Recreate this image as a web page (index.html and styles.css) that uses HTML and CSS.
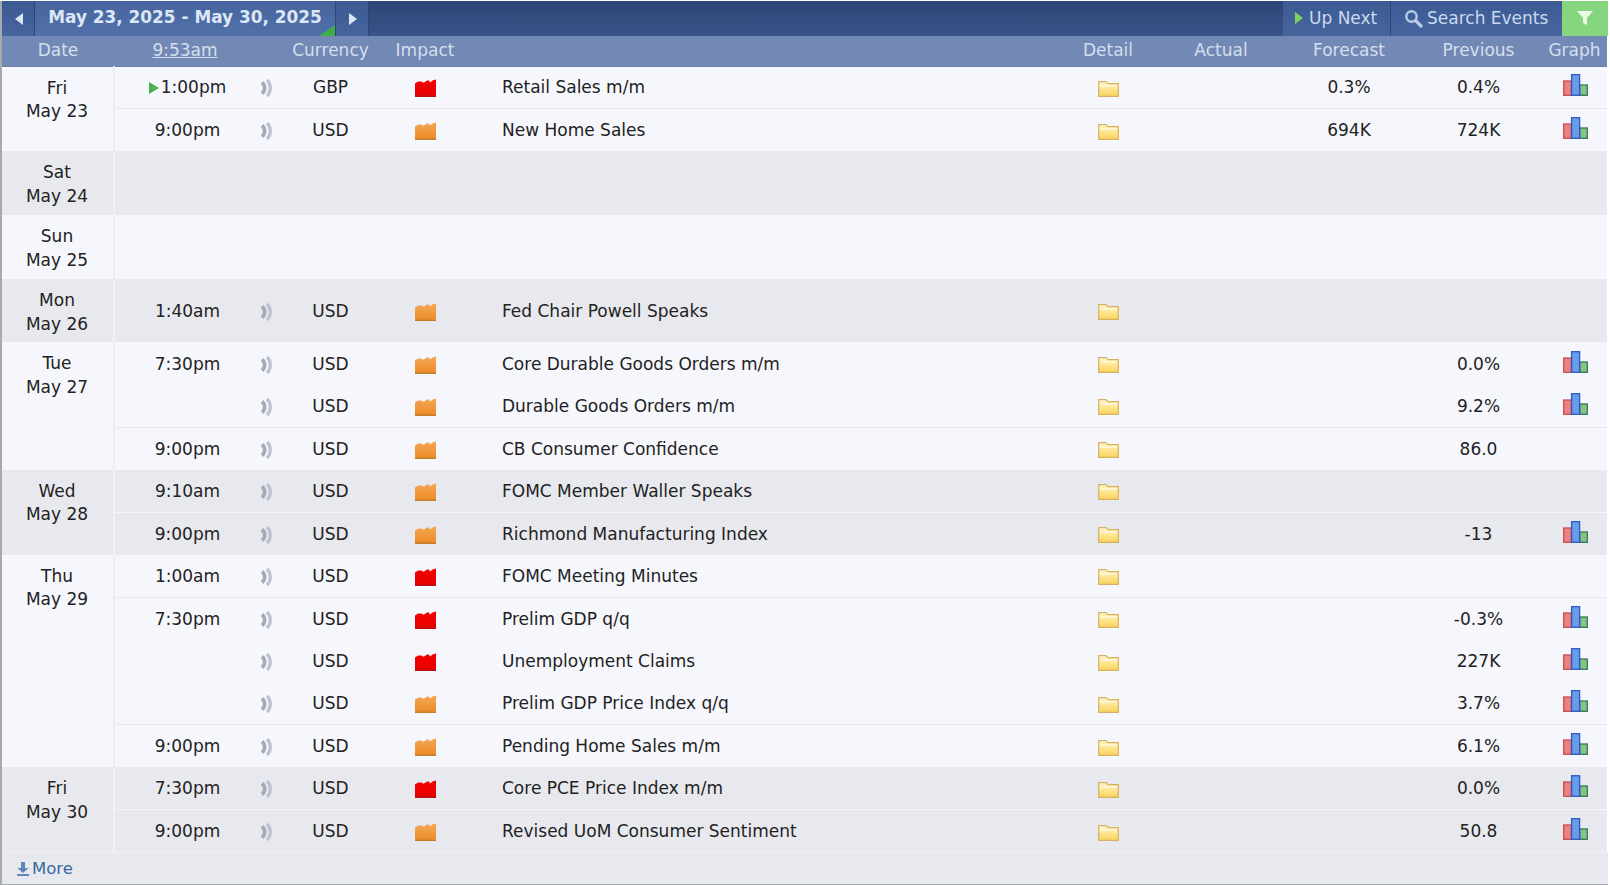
FILE: index.html
```html
<!DOCTYPE html>
<html lang="en">
<head>
<meta charset="utf-8">
<title>Calendar</title>
<link rel="stylesheet" href="styles.css">
</head>
<body>
<svg class="defs" width="0" height="0" aria-hidden="true">
  <defs>
    <linearGradient id="gRed" x1="0" y1="0" x2="0" y2="1"><stop offset="0" stop-color="#f40000"/><stop offset=".85" stop-color="#e80000"/><stop offset="1" stop-color="#b01414"/></linearGradient>
    <linearGradient id="gOra" x1="0" y1="0" x2="0" y2="1"><stop offset="0" stop-color="#f4a654"/><stop offset=".85" stop-color="#ee8f2c"/><stop offset="1" stop-color="#b97a2c"/></linearGradient>
    <linearGradient id="gFol" x1="0" y1="0" x2="0" y2="1"><stop offset="0" stop-color="#fff6cf"/><stop offset=".5" stop-color="#fde690"/><stop offset="1" stop-color="#fbd25c"/></linearGradient>
    <symbol id="high" viewBox="0 0 22 18"><path d="M0 18V4.5L3 2.5H6.5L7.5 3.5H9L12 1.5H14L15 3.5L18 1.2L21 .5V18Z" fill="url(#gRed)"/></symbol>
    <symbol id="med" viewBox="0 0 22 18"><path d="M0 18V4.5L3 2.5H6.5L7.5 3.5H9L12 1.5H14L15 3.5L18 1.2L21 .5V18Z" fill="url(#gOra)"/></symbol>
    <symbol id="snd" viewBox="0 0 14 18"><path d="M2 3.5C5.6 6.5 5.6 11.5 2 14.5" fill="none" stroke="#a4aaba" stroke-width="3.6"/><path d="M7 1C11.4 5 11.4 13 7 17" fill="none" stroke="#bcc2cf" stroke-width="3.2"/></symbol>
    <symbol id="fol" viewBox="0 0 22 17"><path d="M.7 16.3V1.7H8L10 3.7H20.3V16.3Z" fill="url(#gFol)" stroke="#d6b25e" stroke-width="1.2"/><path d="M2 6H19" stroke="#fffbe6" stroke-width="1.2"/></symbol>
    <symbol id="gra" viewBox="0 0 25 22"><rect x=".7" y="7" width="7.6" height="14.3" fill="#ef8080" stroke="#c94c4c" stroke-width="1.3"/><rect x="16.7" y="11" width="7.6" height="10.3" fill="#86c486" stroke="#35775a" stroke-width="1.3"/><rect x="8.6" y=".7" width="8" height="20.6" fill="#6a9cec" stroke="#2a5cc0" stroke-width="1.3"/></symbol>
  </defs>
</svg>
<main class="cal">
  <header class="topbar">
    <a class="nav-btn"><span class="tri tri-left"></span></a>
    <div class="range">May 23, 2025 - May 30, 2025</div>
    <a class="nav-btn"><span class="tri tri-right"></span></a>
    <div class="spacer"></div>
    <a class="tool tool-next"><span class="tri tri-green"></span>Up Next</a>
    <a class="tool tool-search">
      <svg class="ico-search" viewBox="0 0 19 19"><circle cx="7.5" cy="7.5" r="5.2" fill="none" stroke="#b9cbe6" stroke-width="2.4"/><path d="M11.5 11.5L17 17" stroke="#b9cbe6" stroke-width="3.2" stroke-linecap="round"/></svg>Search Events</a>
    <a class="tool-filter"><svg viewBox="0 0 16 16" width="16" height="16"><path d="M0 1H16L10 8V15L6 13V8Z" fill="#eafbe6"/></svg></a>
  </header>
  <table class="grid">
    <colgroup>
      <col class="c-date"><col class="c-time"><col class="c-snd"><col class="c-cur"><col class="c-imp"><col class="c-name"><col class="c-det"><col class="c-act"><col class="c-for"><col class="c-pre"><col class="c-gra">
    </colgroup>
    <thead>
      <tr><th>Date</th><th class="now"><u>9:53am</u></th><th></th><th>Currency</th><th>Impact</th><th></th><th>Detail</th><th>Actual</th><th>Forecast</th><th>Previous</th><th>Graph</th></tr>
    </thead>
    <tbody class="day">
      <tr><td class="date" rowspan="2">Fri<br>May 23</td><td class="time"><span class="tri tri-now"></span>1:00pm</td><td><svg class="i-snd"><use href="#snd"/></svg></td><td>GBP</td><td><svg class="i-imp"><use href="#high"/></svg></td><td class="name">Retail Sales m/m</td><td><svg class="i-fol"><use href="#fol"/></svg></td><td></td><td>0.3%</td><td>0.4%</td><td><svg class="i-gra"><use href="#gra"/></svg></td></tr>
      <tr class="sep"><td class="time">9:00pm</td><td><svg class="i-snd"><use href="#snd"/></svg></td><td>USD</td><td><svg class="i-imp"><use href="#med"/></svg></td><td class="name">New Home Sales</td><td><svg class="i-fol"><use href="#fol"/></svg></td><td></td><td>694K</td><td>724K</td><td><svg class="i-gra"><use href="#gra"/></svg></td></tr>
    </tbody>
    <tbody class="day alt"><tr class="empty"><td class="date">Sat<br>May 24</td><td colspan="10"></td></tr></tbody>
    <tbody class="day"><tr class="empty"><td class="date">Sun<br>May 25</td><td colspan="10"></td></tr></tbody>
    <tbody class="day alt"><tr class="solo"><td class="date">Mon<br>May 26</td><td class="time">1:40am</td><td><svg class="i-snd"><use href="#snd"/></svg></td><td>USD</td><td><svg class="i-imp"><use href="#med"/></svg></td><td class="name">Fed Chair Powell Speaks</td><td><svg class="i-fol"><use href="#fol"/></svg></td><td></td><td></td><td></td><td></td></tr></tbody>
    <tbody class="day">
      <tr><td class="date" rowspan="3">Tue<br>May 27</td><td class="time">7:30pm</td><td><svg class="i-snd"><use href="#snd"/></svg></td><td>USD</td><td><svg class="i-imp"><use href="#med"/></svg></td><td class="name">Core Durable Goods Orders m/m</td><td><svg class="i-fol"><use href="#fol"/></svg></td><td></td><td></td><td>0.0%</td><td><svg class="i-gra"><use href="#gra"/></svg></td></tr>
      <tr><td class="time"></td><td><svg class="i-snd"><use href="#snd"/></svg></td><td>USD</td><td><svg class="i-imp"><use href="#med"/></svg></td><td class="name">Durable Goods Orders m/m</td><td><svg class="i-fol"><use href="#fol"/></svg></td><td></td><td></td><td>9.2%</td><td><svg class="i-gra"><use href="#gra"/></svg></td></tr>
      <tr class="sep"><td class="time">9:00pm</td><td><svg class="i-snd"><use href="#snd"/></svg></td><td>USD</td><td><svg class="i-imp"><use href="#med"/></svg></td><td class="name">CB Consumer Confidence</td><td><svg class="i-fol"><use href="#fol"/></svg></td><td></td><td></td><td>86.0</td><td></td></tr>
    </tbody>
    <tbody class="day alt">
      <tr><td class="date" rowspan="2">Wed<br>May 28</td><td class="time">9:10am</td><td><svg class="i-snd"><use href="#snd"/></svg></td><td>USD</td><td><svg class="i-imp"><use href="#med"/></svg></td><td class="name">FOMC Member Waller Speaks</td><td><svg class="i-fol"><use href="#fol"/></svg></td><td></td><td></td><td></td><td></td></tr>
      <tr class="sep"><td class="time">9:00pm</td><td><svg class="i-snd"><use href="#snd"/></svg></td><td>USD</td><td><svg class="i-imp"><use href="#med"/></svg></td><td class="name">Richmond Manufacturing Index</td><td><svg class="i-fol"><use href="#fol"/></svg></td><td></td><td></td><td>-13</td><td><svg class="i-gra"><use href="#gra"/></svg></td></tr>
    </tbody>
    <tbody class="day">
      <tr><td class="date" rowspan="5">Thu<br>May 29</td><td class="time">1:00am</td><td><svg class="i-snd"><use href="#snd"/></svg></td><td>USD</td><td><svg class="i-imp"><use href="#high"/></svg></td><td class="name">FOMC Meeting Minutes</td><td><svg class="i-fol"><use href="#fol"/></svg></td><td></td><td></td><td></td><td></td></tr>
      <tr class="sep"><td class="time">7:30pm</td><td><svg class="i-snd"><use href="#snd"/></svg></td><td>USD</td><td><svg class="i-imp"><use href="#high"/></svg></td><td class="name">Prelim GDP q/q</td><td><svg class="i-fol"><use href="#fol"/></svg></td><td></td><td></td><td>-0.3%</td><td><svg class="i-gra"><use href="#gra"/></svg></td></tr>
      <tr><td class="time"></td><td><svg class="i-snd"><use href="#snd"/></svg></td><td>USD</td><td><svg class="i-imp"><use href="#high"/></svg></td><td class="name">Unemployment Claims</td><td><svg class="i-fol"><use href="#fol"/></svg></td><td></td><td></td><td>227K</td><td><svg class="i-gra"><use href="#gra"/></svg></td></tr>
      <tr><td class="time"></td><td><svg class="i-snd"><use href="#snd"/></svg></td><td>USD</td><td><svg class="i-imp"><use href="#med"/></svg></td><td class="name">Prelim GDP Price Index q/q</td><td><svg class="i-fol"><use href="#fol"/></svg></td><td></td><td></td><td>3.7%</td><td><svg class="i-gra"><use href="#gra"/></svg></td></tr>
      <tr class="sep"><td class="time">9:00pm</td><td><svg class="i-snd"><use href="#snd"/></svg></td><td>USD</td><td><svg class="i-imp"><use href="#med"/></svg></td><td class="name">Pending Home Sales m/m</td><td><svg class="i-fol"><use href="#fol"/></svg></td><td></td><td></td><td>6.1%</td><td><svg class="i-gra"><use href="#gra"/></svg></td></tr>
    </tbody>
    <tbody class="day alt">
      <tr><td class="date" rowspan="2">Fri<br>May 30</td><td class="time">7:30pm</td><td><svg class="i-snd"><use href="#snd"/></svg></td><td>USD</td><td><svg class="i-imp"><use href="#high"/></svg></td><td class="name">Core PCE Price Index m/m</td><td><svg class="i-fol"><use href="#fol"/></svg></td><td></td><td></td><td>0.0%</td><td><svg class="i-gra"><use href="#gra"/></svg></td></tr>
      <tr class="sep"><td class="time">9:00pm</td><td><svg class="i-snd"><use href="#snd"/></svg></td><td>USD</td><td><svg class="i-imp"><use href="#med"/></svg></td><td class="name">Revised UoM Consumer Sentiment</td><td><svg class="i-fol"><use href="#fol"/></svg></td><td></td><td></td><td>50.8</td><td><svg class="i-gra"><use href="#gra"/></svg></td></tr>
    </tbody>
  </table>
  <footer class="more"><svg viewBox="0 0 12 14" width="12" height="14"><path d="M4 0H8V6H11.5L6 11L.5 6H4Z M0 12H12V14H0Z" fill="#5c87b8"/></svg>More</footer>
</main>
</body>
</html>
```
FILE: styles.css
```css
* { box-sizing: border-box; }
html, body { margin: 0; padding: 0; background: #fff; }
body { font-family: "DejaVu Sans", Verdana, sans-serif; font-size: 17px; color: #222; overflow: hidden; }
.defs { position: absolute; }
.cal { width: 1608px; height: 884px; margin-top: 1px; border-left: 2px solid #a6a9ae; border-bottom: 1px solid #a6a9ae; display: flex; flex-direction: column; }
.topbar { display: flex; height: 35px; background: linear-gradient(#2c4677, #3a5488); color: #d8e3f4; }
.nav-btn { width: 33px; padding-left: 1px; display: flex; align-items: center; justify-content: center; background: linear-gradient(#3b5a92, #46659e); border-right: 1px solid #2d4675; }
.range { position: relative; width: 301px; font-weight: bold; font-size: 16.9px; line-height: 33px; text-align: center; color: #dce6f5; background: linear-gradient(#46659f, #5271ab); border-right: 1px solid #2d4675; overflow: hidden; }
.range::after { content: ""; position: absolute; right: 0; bottom: 0; border-style: solid; border-width: 0 0 11px 16px; border-color: transparent transparent #3fae4a transparent; }
.spacer { flex: 1; }
.tri { display: inline-block; width: 0; height: 0; border-style: solid; }
.tri-left { border-width: 6px 8px 6px 0; border-color: transparent #dbe5f5 transparent transparent; }
.tri-right { border-width: 6px 0 6px 8px; border-color: transparent transparent transparent #dbe5f5; }
.tri-green { border-width: 6px 0 6px 8px; border-color: transparent transparent transparent #7fd35a; margin-right: 6px; }
.tool { display: flex; align-items: center; padding-bottom: 1px; font-size: 17px; color: #ccd9ee; background: linear-gradient(#3c5b94, #46659e); }
.tool-next { width: 108px; padding-left: 12px; border-right: 1px solid #2d4675; }
.tool-search { width: 171px; padding-left: 13px; }
.ico-search { width: 19px; height: 19px; margin-right: 4px; }
.tool-filter { width: 46px; display: flex; align-items: center; justify-content: center; padding-bottom: 2px; background: #86d67f; }
.grid { width: 1605px; border-collapse: collapse; table-layout: fixed; }
.c-date { width: 112px; }
.c-time { width: 137px; }
.c-snd { width: 31px; }
.c-cur { width: 97px; }
.c-imp { width: 92px; }
.c-name { width: 586px; }
.c-det { width: 102px; }
.c-act { width: 124px; }
.c-for { width: 132px; }
.c-pre { width: 127px; }
.c-gra { width: 65px; }
th { height: 30px; padding: 0 0 2px; font-weight: normal; font-size: 17px; color: #d5deee; background: #7389b5; border-bottom: 1px solid #6a80ad; }
th.now { padding-left: 5px; }
td { height: 42.5px; padding: 0; text-align: center; font-size: 17px; vertical-align: middle; background: #f5f7fc; }
.alt td { background: #e7e9ee; }
td.date { vertical-align: top; padding: 10px 1px 0 0; line-height: 23.5px; border-right: 2px solid #eceef3; }
.alt td.date { border-right-color: #f0f1f5; }
td.time { padding-left: 9px; }
td.name { text-align: left; padding-left: 31px; }
.sep td:not(.date) { border-top: 1px solid #e6e8ee; }
.alt .sep td:not(.date) { border-top-color: #f5f6fa; }
.empty td { height: 64px; }
.solo td { height: 63.3px; }
.tri-now { border-width: 6px 0 6px 10px; border-color: transparent transparent transparent #4cb052; margin-right: 2px; vertical-align: -1px; }
svg { vertical-align: middle; }
.i-snd { width: 14px; height: 18px; }
.i-imp { width: 22px; height: 18px; margin-left: 2px; }
.i-fol { width: 22px; height: 17px; margin-left: 2px; }
.i-gra { width: 25px; height: 22px; margin: 0 0 4px 2px; }
.more { flex: 1; display: flex; align-items: center; gap: 3px; padding-left: 15px; font-size: 16.5px; color: #38699f; background: #e7e9ee; border-top: 1px solid #f0f1f5; }
```
